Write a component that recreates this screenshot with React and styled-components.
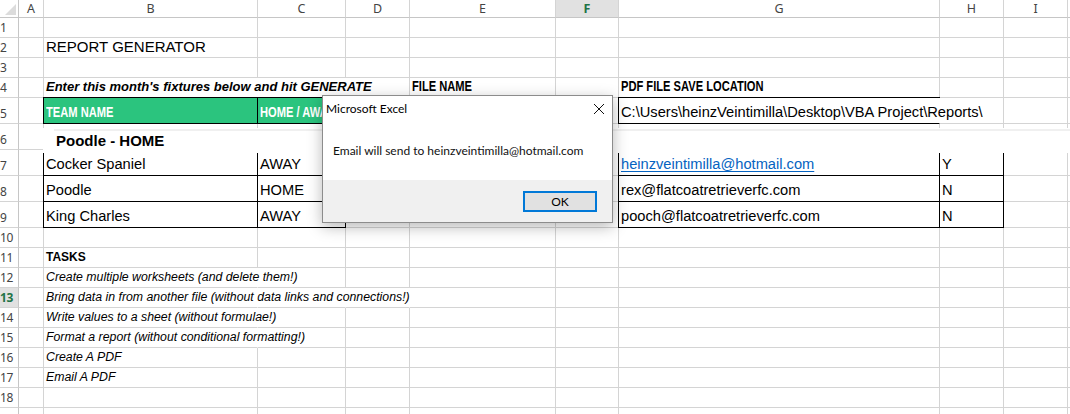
import React from 'react';
import styled, { createGlobalStyle } from 'styled-components';

const GlobalStyle = createGlobalStyle`
  html, body {
    margin: 0;
    padding: 0;
    background: #fff;
    overflow: hidden;
  }
`;

const GRID = '#d4d4d4';
const HEAD_LINE = '#c6c6c6';
const GREEN = '#2bc47e';
const CELL_FONT = `'Liberation Sans', Arial, sans-serif`;
const HEAD_FONT = `'Noto Sans', 'Open Sans', sans-serif`;
const UI_FONT = `Lato, 'Noto Sans', sans-serif`;

const COLUMNS = [
  { key: 'A', width: 25 },
  { key: 'B', width: 214 },
  { key: 'C', width: 88 },
  { key: 'D', width: 64 },
  { key: 'E', width: 146 },
  { key: 'F', width: 63 },
  { key: 'G', width: 321 },
  { key: 'H', width: 64 },
  { key: 'I', width: 64 },
];

const ROW_HEIGHTS = [20, 20, 20, 20, 26, 26, 26, 26, 26, 20, 20, 20, 20, 20, 20, 20, 20, 20, 20];
const LAST_NUMBERED_ROW = 18;

const ACTIVE_COL = 'F';
const ACTIVE_ROW = 13;

const CELLS = {
  B2: { text: 'REPORT GENERATOR', kind: 'title' },
  B4: { text: "Enter this month's fixtures below and hit GENERATE", kind: 'lead', spill: true },
  C4: { spill: true },
  E4: { text: 'FILE NAME', kind: 'label' },
  G4: { text: 'PDF FILE SAVE LOCATION', kind: 'label' },
  B5: { text: 'TEAM NAME', kind: 'head', fill: GREEN, box: 'tlbr' },
  C5: { text: 'HOME / AWAY', kind: 'head', fill: GREEN, box: 'tlbr' },
  G5: { text: 'C:\\Users\\heinzVeintimilla\\Desktop\\VBA Project\\Reports\\', kind: 'plain', box: 'tlb', spill: true },
  B7: { text: 'Cocker Spaniel', kind: 'plain', box: 'tlbr' },
  C7: { text: 'AWAY', kind: 'plain', box: 'tlbr' },
  G7: { text: 'heinzveintimilla@hotmail.com', kind: 'link', box: 'tlbr' },
  H7: { text: 'Y', kind: 'plain', box: 'tlbr' },
  B8: { text: 'Poodle', kind: 'plain', box: 'tlbr' },
  C8: { text: 'HOME', kind: 'plain', box: 'tlbr' },
  G8: { text: 'rex@flatcoatretrieverfc.com', kind: 'plain', box: 'tlbr' },
  H8: { text: 'N', kind: 'plain', box: 'tlbr' },
  B9: { text: 'King Charles', kind: 'plain', box: 'tlbr' },
  C9: { text: 'AWAY', kind: 'plain', box: 'tlbr' },
  G9: { text: 'pooch@flatcoatretrieverfc.com', kind: 'plain', box: 'tlbr' },
  H9: { text: 'N', kind: 'plain', box: 'tlbr' },
  B11: { text: 'TASKS', kind: 'taskHead' },
  B12: { text: 'Create multiple worksheets (and delete them!)', kind: 'task', spill: true },
  B13: { text: 'Bring data in from another file (without data links and connections!)', kind: 'task', spill: true },
  C13: { spill: true },
  D13: { spill: true },
  B14: { text: 'Write values to a sheet (without formulae!)', kind: 'task', spill: true },
  B15: { text: 'Format a report (without conditional formatting!)', kind: 'task', spill: true },
  B16: { text: 'Create A PDF', kind: 'task' },
  B17: { text: 'Email A PDF', kind: 'task' },
};

const Window = styled.div`
  position: relative;
  width: 1070px;
  height: 414px;
  overflow: hidden;
  background: #fff;
`;

const Sheet = styled.div`
  display: grid;
  grid-template-columns: 19px ${COLUMNS.map((c) => `${c.width}px`).join(' ')} 1fr;
  grid-template-rows: 18px ${ROW_HEIGHTS.map((h) => `${h}px`).join(' ')};
`;

const Corner = styled.div`
  box-sizing: border-box;
  border-right: 1px solid ${HEAD_LINE};
  border-bottom: 1px solid ${HEAD_LINE};
  display: flex;
  align-items: flex-end;
  justify-content: flex-end;
  padding: 0 2px 2px 0;
`;

const ColHead = styled.div`
  box-sizing: border-box;
  display: flex;
  align-items: center;
  justify-content: center;
  border-right: 1px solid ${GRID};
  border-bottom: 1px solid ${HEAD_LINE};
  background: ${(p) => (p.$active ? '#e1e1e1' : '#fff')};
  color: ${(p) => (p.$active ? '#217346' : '#444')};
  font-weight: ${(p) => (p.$active ? 700 : 400)};
  font-family: ${HEAD_FONT};
  font-size: 12.5px;
`;

const RowHead = styled.div`
  box-sizing: border-box;
  display: flex;
  align-items: flex-end;
  padding: 0 0 1px 0;
  border-right: 1px solid ${HEAD_LINE};
  border-bottom: 1px solid ${GRID};
  background: ${(p) => (p.$active ? '#e1e1e1' : '#fff')};
  color: ${(p) => (p.$active ? '#217346' : '#444')};
  font-weight: ${(p) => (p.$active ? 700 : 400)};
  font-family: ${HEAD_FONT};
  font-size: 12px;
  line-height: 16px;
  letter-spacing: -0.3px;
`;

const edgeShadow = ({ $bt, $bl }) => {
  const parts = [];
  if ($bt) parts.push('0 -1px 0 #000');
  if ($bl) parts.push('-1px 0 0 #000');
  if ($bt && $bl) parts.push('-1px -1px 0 #000');
  return parts.length ? parts.join(', ') : 'none';
};

const Cell = styled.div`
  box-sizing: border-box;
  display: flex;
  align-items: flex-end;
  min-width: 0;
  padding: 0 0 2px 2px;
  white-space: nowrap;
  overflow: visible;
  background: ${(p) => p.$fill || 'transparent'};
  border-right: 1px solid ${(p) => (p.$br ? '#000' : p.$spill ? 'transparent' : GRID)};
  border-bottom: 1px solid ${(p) => (p.$bb ? '#000' : GRID)};
  box-shadow: ${edgeShadow};
  font-family: ${CELL_FONT};
  font-size: 11pt;
  line-height: 17px;
  color: #000;
`;

const Plain = styled.span``;

const Title = styled.span`
  font-size: 15px;
`;

const Lead = styled.span`
  font-size: 13px;
  font-weight: 700;
  font-style: italic;
`;

/* stands in for Arial Narrow Bold, which is not installed */
const Label = styled.span`
  display: inline-block;
  font-size: 14.67px;
  font-weight: 700;
  transform: scaleX(0.76);
  transform-origin: left bottom;
`;

const HeadLabel = styled(Label)`
  color: #fff;
`;

const Link = styled.span`
  color: #0563c1;
  text-decoration: underline;
  text-underline-offset: 2px;
`;

const TaskHead = styled.span`
  font-size: 12px;
  font-weight: 700;
  line-height: 15px;
`;

const Task = styled.span`
  font-size: 12.3px;
  font-style: italic;
  line-height: 15px;
`;

const TEXT = {
  plain: Plain,
  title: Title,
  lead: Lead,
  label: Label,
  head: HeadLabel,
  link: Link,
  taskHead: TaskHead,
  task: Task,
};

const Banner = styled.div`
  position: absolute;
  left: 43px;
  top: 128px;
  right: 0;
  height: 25px;
  background: #fff;
  display: flex;
  align-items: center;
  padding-left: 13px;
  font-family: ${CELL_FONT};
  font-size: 15px;
  font-weight: 700;

  &::before {
    content: '';
    position: absolute;
    left: 11px;
    right: 0;
    top: 1px;
    height: 2px;
    background: #f0f0f0;
  }
`;

const Dialog = styled.div`
  position: absolute;
  left: 322px;
  top: 95px;
  width: 291px;
  height: 128px;
  box-sizing: border-box;
  border: 1px solid #8c8c8c;
  background: #fff;
  box-shadow: 0 4px 14px rgba(0, 0, 0, 0.28);
  display: flex;
  flex-direction: column;
  font-family: ${UI_FONT};
  font-size: 12px;
  color: #000;
`;

const TitleBar = styled.div`
  height: 25px;
  display: flex;
  align-items: center;
  justify-content: space-between;
  padding: 0 7px 0 3px;
`;

const Message = styled.div`
  flex: 1;
  display: flex;
  align-items: center;
  padding-left: 10px;
  color: #111;
`;

const Footer = styled.div`
  height: 42px;
  background: #f0f0f0;
  display: flex;
  align-items: center;
  justify-content: flex-end;
  padding-right: 15px;
`;

const OkButton = styled.button`
  box-sizing: border-box;
  width: 74px;
  height: 21px;
  border: 2px solid #0078d7;
  background: #e1e1e1;
  font-family: ${UI_FONT};
  font-size: 12px;
  color: #000;
  padding: 0;
`;

const CloseIcon = () => (
  <svg width="12" height="12" viewBox="0 0 12 12">
    <path d="M1 1 L11 11 M11 1 L1 11" stroke="#111" strokeWidth="1" fill="none" />
  </svg>
);

const CornerMark = () => (
  <svg width="11" height="11" viewBox="0 0 11 11">
    <polygon points="11,0 11,11 0,11" fill="#dcdcdc" />
  </svg>
);

function SheetCell({ id }) {
  const def = CELLS[id] || {};
  const box = def.box || '';
  const Text = TEXT[def.kind] || Plain;
  return (
    <Cell
      $fill={def.fill}
      $spill={def.spill}
      $bt={box.includes('t')}
      $bl={box.includes('l')}
      $bb={box.includes('b')}
      $br={box.includes('r')}
    >
      {def.text && <Text>{def.text}</Text>}
    </Cell>
  );
}

export default function App() {
  return (
    <Window>
      <GlobalStyle />
      <Sheet>
        <Corner>
          <CornerMark />
        </Corner>
        {COLUMNS.map((c) => (
          <ColHead key={c.key} $active={c.key === ACTIVE_COL}>
            {c.key}
          </ColHead>
        ))}
        <ColHead />
        {ROW_HEIGHTS.map((_, i) => {
          const row = i + 1;
          return (
            <React.Fragment key={row}>
              <RowHead $active={row === ACTIVE_ROW}>{row <= LAST_NUMBERED_ROW ? row : ''}</RowHead>
              {COLUMNS.map((c) => (
                <SheetCell key={c.key} id={`${c.key}${row}`} />
              ))}
              <Cell />
            </React.Fragment>
          );
        })}
      </Sheet>

      <Banner>Poodle - HOME</Banner>

      <Dialog>
        <TitleBar>
          <span>Microsoft Excel</span>
          <CloseIcon />
        </TitleBar>
        <Message>Email will send to heinzveintimilla@hotmail.com</Message>
        <Footer>
          <OkButton>OK</OkButton>
        </Footer>
      </Dialog>
    </Window>
  );
}
